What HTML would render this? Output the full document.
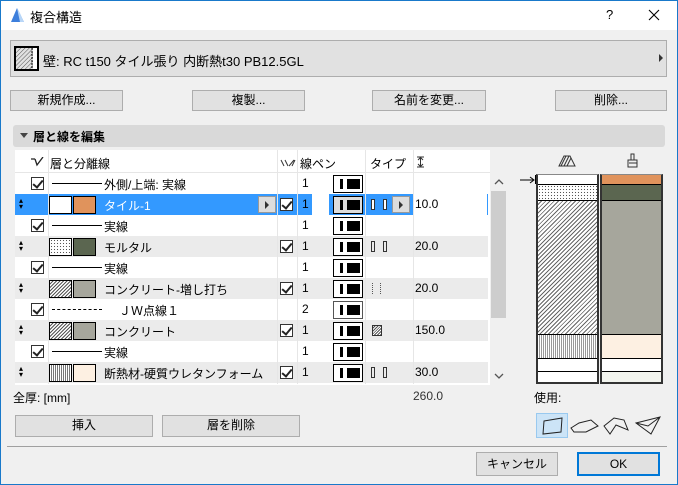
<!DOCTYPE html>
<html><head><meta charset="utf-8">
<style>
*{box-sizing:border-box;margin:0;padding:0}
body{width:678px;height:485px;overflow:hidden;background:#f0f0f0;font-family:"Liberation Sans","Noto Sans CJK JP",sans-serif;font-size:12px;color:#000;position:relative}
.a{position:absolute}
.btn{position:absolute;background:#e1e1e1;border:1px solid #adadad;text-align:center;line-height:19px;font-size:12px}
.row{position:absolute;left:15px;width:473px;height:21px}
.cb{position:absolute;width:13px;height:13px;border:1px solid #333;background:#fff}
.cb:after{content:"";position:absolute;left:3px;top:0px;width:4px;height:8px;border:solid #222;border-width:0 2px 2px 0;transform:rotate(40deg)}
.pen{position:absolute;left:318px;width:30px;height:18px;border:1px solid #000;background:#fff}
.pen:before{content:"";position:absolute;left:6px;top:3px;width:3px;height:10px;background:#000}
.pen:after{content:"";position:absolute;left:13px;top:3px;width:13px;height:10px;background:#000}
.t{position:absolute;top:3px}
.sw{position:absolute;top:2px;width:23px;height:18px;border:1px solid #000}
.ln{position:absolute;left:37px;top:10px;width:50px;border-top:1px solid #000}
.ud{position:absolute;left:2px;top:4px;font-size:8px;line-height:6px;width:8px;text-align:center}
.tp{position:absolute;top:5px;width:4px;height:11px;border:1px solid #333}
</style></head><body>
<div class="a" style="left:0;top:0;width:678px;height:485px;border:1px solid #1979ca"></div>
<div class="a" style="left:1px;top:1px;width:676px;height:29px;background:#fff"></div>
<svg class="a" style="left:9px;top:6px" width="17" height="17"><path d="M2 16 L8 2 L15 16 Z" fill="#3d7fdc"/><path d="M8 2 C11 6 13 12 15 16 L11 16 Z" fill="#b8d6f7"/></svg>
<div class="a" style="left:30px;top:7px;font-size:13px">複合構造</div>
<div class="a" style="left:606px;top:7px;font-size:13px">?</div>
<svg class="a" style="left:648px;top:9px" width="12" height="12"><path d="M1 1 L11 11 M11 1 L1 11" stroke="#000" stroke-width="1.1"/></svg>

<div class="a" style="left:10px;top:40px;width:657px;height:37px;background:#e1e1e1;border:1px solid #adadad"></div>
<svg class="a" style="left:14px;top:46px" width="26" height="25"><defs><pattern id="h" width="3" height="3" patternUnits="userSpaceOnUse" patternTransform="rotate(45)"><line x1="0" y1="0" x2="0" y2="3" stroke="#555" stroke-width="1"/></pattern></defs><rect x="1" y="1" width="23" height="23" fill="url(#h)" stroke="#000" stroke-width="2"/><line x1="18" y1="2" x2="18" y2="23" stroke="#000" stroke-dasharray="2,1"/><rect x="19" y="2" width="4" height="21" fill="#fff"/></svg>
<div class="a" style="left:43px;top:51px;font-size:13px">壁: RC t150 タイル張り 内断熱t30 PB12.5GL</div>
<div class="a" style="left:659px;top:54px;width:0;height:0;border-left:4px solid #333;border-top:4px solid transparent;border-bottom:4px solid transparent"></div>

<div class="btn" style="left:10px;top:90px;width:113px;height:21px">新規作成...</div>
<div class="btn" style="left:192px;top:90px;width:113px;height:21px">複製...</div>
<div class="btn" style="left:372px;top:90px;width:114px;height:21px">名前を変更...</div>
<div class="btn" style="left:555px;top:90px;width:112px;height:21px">削除...</div>

<div class="a" style="left:13px;top:125px;width:652px;height:22px;background:#d9d9d9;border-radius:3px"></div>
<div class="a" style="left:20px;top:133px;width:0;height:0;border-top:5px solid #444;border-left:4px solid transparent;border-right:4px solid transparent"></div>
<div class="a" style="left:33px;top:128px;font-weight:bold">層と線を編集</div>

<div class="a" style="left:15px;top:150px;width:475px;height:235px;background:#fff"></div>
<div class="a" style="left:15px;top:150px;width:475px;height:23px;background:#fff;border-bottom:1px solid #e6e6e6"></div>
<svg class="a" style="left:31px;top:157px" width="14" height="10"><path d="M0 2 H4 M4 2 L6 8 L12 0" fill="none" stroke="#222" stroke-width="1.3"/></svg>
<div class="a" style="left:50px;top:155px">層と分離線</div>
<svg class="a" style="left:280px;top:159px" width="16" height="8"><path d="M1 1 L4 7 M5 1 L8 7 M9 7 L14 1 M12 7 L15 1" stroke="#333"/></svg>
<div class="a" style="left:300px;top:155px">線ペン</div>
<div class="a" style="left:370px;top:155px">タイプ</div>
<svg class="a" style="left:416px;top:156px" width="9" height="12"><path d="M1 1 H8 M4.5 1 V11 M1 11 H8 M2 4 L4.5 1.5 L7 4 M2 8 L4.5 10.5 L7 8" fill="none" stroke="#333"/></svg>

<div class="row" style="top:173px;background:#fff"><div class="cb" style="left:16px;top:4px"></div><div class="ln"></div><div class="t" style="left:89px">外側/上端: 実線</div><div class="t" style="left:287px">1</div><div class="pen" style="top:2px"></div></div>

<div class="row" style="top:194px;background:#fff"><div class="a" style="left:0;top:0;width:262px;height:21px;background:#3399ff"></div><div class="a" style="left:262px;top:0;width:35px;height:21px;background:#3399ff"></div>
<div class="ud">▴<br>▾</div>
<div class="sw" style="left:34px;background:#fff"></div><div class="sw" style="left:58px;background:#e0935c"></div>
<div class="t" style="left:89px;color:#fff">タイル-1</div>
<div class="a" style="left:243px;top:2px;width:18px;height:17px;background:#ddd;border:1px solid #999"></div><div class="a" style="left:250px;top:7px;border-left:4px solid #333;border-top:4px solid transparent;border-bottom:4px solid transparent"></div>
<div class="cb" style="left:265px;top:4px"></div>
<div class="t" style="left:287px">1</div>
<div class="a" style="left:314px;top:0;width:36px;height:21px;background:#3399ff"></div><div class="pen" style="top:2px;background:#ddd"></div>
<div class="a" style="left:351px;top:0;width:47px;height:21px;background:#3399ff"></div><div class="tp" style="left:356px;background:#fff"></div><div class="tp" style="left:368px;background:#fff"></div>
<div class="a" style="left:377px;top:2px;width:18px;height:17px;background:#ddd;border:1px solid #999"></div><div class="a" style="left:384px;top:7px;border-left:4px solid #333;border-top:4px solid transparent;border-bottom:4px solid transparent"></div>
<div class="t" style="left:400px">10.0</div>
<div class="a" style="left:472px;top:0;width:1px;height:21px;background:#3399ff"></div></div>

<div class="row" style="top:215px;background:#fff"><div class="cb" style="left:16px;top:4px"></div><div class="ln"></div><div class="t" style="left:89px">実線</div><div class="t" style="left:287px">1</div><div class="pen" style="top:2px"></div></div>

<div class="row" style="top:236px;background:#ebebeb"><div class="ud">▴<br>▾</div><div class="sw" style="left:34px;background:#fff radial-gradient(#555 0.6px,transparent 0.8px) 0 0/3px 3px"></div><div class="sw" style="left:58px;background:#5b6650"></div><div class="t" style="left:89px">モルタル</div><div class="cb" style="left:265px;top:4px"></div><div class="t" style="left:287px">1</div><div class="pen" style="top:2px"></div><div class="tp" style="left:356px"></div><div class="tp" style="left:368px"></div><div class="t" style="left:400px">20.0</div></div>

<div class="row" style="top:257px;background:#fff"><div class="cb" style="left:16px;top:4px"></div><div class="ln"></div><div class="t" style="left:89px">実線</div><div class="t" style="left:287px">1</div><div class="pen" style="top:2px"></div></div>

<div class="row" style="top:278px;background:#ebebeb"><div class="ud">▴<br>▾</div><div class="sw" style="left:34px;background:repeating-linear-gradient(135deg,#fff 0 1.5px,#555 1.5px 2.5px)"></div><div class="sw" style="left:58px;background:#a6a69c"></div><div class="t" style="left:89px">コンクリート-増し打ち</div><div class="cb" style="left:265px;top:4px"></div><div class="t" style="left:287px">1</div><div class="pen" style="top:2px"></div><div class="a" style="left:357px;top:5px;width:9px;height:11px;border-left:1px dotted #555;border-right:1px dotted #555"></div><div class="t" style="left:400px">20.0</div></div>

<div class="row" style="top:299px;background:#fff"><div class="cb" style="left:16px;top:4px"></div><div class="ln" style="border-top:1px dashed #000"></div><div class="t" style="left:104px">ＪＷ点線１</div><div class="t" style="left:287px">2</div><div class="pen" style="top:2px;border-color:#555"></div></div>

<div class="row" style="top:320px;background:#ebebeb"><div class="ud">▴<br>▾</div><div class="sw" style="left:34px;background:repeating-linear-gradient(135deg,#fff 0 1.5px,#555 1.5px 2.5px)"></div><div class="sw" style="left:58px;background:#a6a69c"></div><div class="t" style="left:89px">コンクリート</div><div class="cb" style="left:265px;top:4px"></div><div class="t" style="left:287px">1</div><div class="pen" style="top:2px"></div><div class="a" style="left:357px;top:5px;width:10px;height:11px;border:1px solid #333;background:repeating-linear-gradient(135deg,#fff 0 1px,#555 1px 2px)"></div><div class="t" style="left:400px">150.0</div></div>

<div class="row" style="top:341px;background:#fff"><div class="cb" style="left:16px;top:4px"></div><div class="ln"></div><div class="t" style="left:89px">実線</div><div class="t" style="left:287px">1</div><div class="pen" style="top:2px"></div></div>

<div class="row" style="top:362px;background:#ebebeb;height:21px"><div class="ud">▴<br>▾</div><div class="sw" style="left:34px;background:repeating-linear-gradient(90deg,#fff 0 1px,#777 1px 2px)"></div><div class="sw" style="left:58px;background:#fdf0e2"></div><div class="t" style="left:89px">断熱材-硬質ウレタンフォーム</div><div class="cb" style="left:265px;top:4px"></div><div class="t" style="left:287px">1</div><div class="pen" style="top:2px"></div><div class="tp" style="left:356px"></div><div class="tp" style="left:368px"></div><div class="t" style="left:400px">30.0</div></div>

<div class="a" style="left:48px;top:150px;width:1px;height:234px;background:#e6e6e6"></div>
<div class="a" style="left:277px;top:150px;width:1px;height:234px;background:#e6e6e6"></div>
<div class="a" style="left:297px;top:150px;width:1px;height:234px;background:#e6e6e6"></div>
<div class="a" style="left:365px;top:150px;width:1px;height:234px;background:#e6e6e6"></div>
<div class="a" style="left:413px;top:150px;width:1px;height:234px;background:#e6e6e6"></div>
<div class="a" style="left:490px;top:173px;width:16px;height:211px;background:#f0f0f0"></div>
<div class="a" style="left:491px;top:191px;width:15px;height:127px;background:#cdcdcd"></div>
<svg class="a" style="left:494px;top:179px" width="10" height="6"><path d="M1 5 L5 1 L9 5" fill="none" stroke="#555" stroke-width="1.3"/></svg>
<svg class="a" style="left:494px;top:373px" width="10" height="6"><path d="M1 1 L5 5 L9 1" fill="none" stroke="#555" stroke-width="1.3"/></svg>

<div class="a" style="left:516px;top:150px;width:150px;height:290px;background:#f0f0f0"></div>
<svg class="a" style="left:558px;top:155px" width="18" height="12"><path d="M1 11 L6 1 H12 L17 11 Z" fill="none" stroke="#333"/><path d="M3 11 L8 1 M6 11 L11 1 M9 11 L13 3" stroke="#333"/></svg>
<svg class="a" style="left:627px;top:153px" width="12" height="15"><rect x="4" y="1" width="3" height="6" fill="none" stroke="#333"/><path d="M2 7 H10 V14 H1 V7 Z" fill="none" stroke="#333"/><path d="M2 10 H10" stroke="#333"/></svg>
<svg class="a" style="left:520px;top:176px" width="16" height="8"><path d="M0 4 H13 M10 1 L14 4 L10 7" fill="none" stroke="#000"/></svg>
<div class="a" style="left:535px;top:175px;width:2px;height:9px;background:#000"></div>
<div class="a" style="left:536px;top:174px;width:63px;height:210px;border:2px solid #333;border-top:1px solid #888;background:#fff"></div>
<div class="a" style="left:538px;top:184px;width:59px;height:16px;border-top:1px solid #000;background:#fff radial-gradient(#555 0.6px,transparent 0.8px) 0 0/3px 3px"></div>
<div class="a" style="left:538px;top:200px;width:59px;height:134px;border-top:1px solid #000;background:repeating-linear-gradient(135deg,#fff 0 2px,#666 2px 3px)"></div>
<div class="a" style="left:538px;top:334px;width:59px;height:24px;border-top:1px solid #000;background:repeating-linear-gradient(90deg,#fff 0 1px,#999 1px 2px)"></div>
<div class="a" style="left:538px;top:358px;width:59px;height:14px;border-top:1px solid #000;border-bottom:1px solid #000"></div>
<div class="a" style="left:600px;top:174px;width:63px;height:210px;border:2px solid #333;border-top:1px solid #888;background:#f2f4ee"></div>
<div class="a" style="left:602px;top:175px;width:59px;height:9px;background:#e0935c"></div>
<div class="a" style="left:602px;top:184px;width:59px;height:16px;border-top:1px solid #000;background:#5b6650"></div>
<div class="a" style="left:602px;top:200px;width:59px;height:134px;border-top:1px solid #000;background:#a6a69c"></div>
<div class="a" style="left:602px;top:334px;width:59px;height:24px;border-top:1px solid #000;background:#fdf0e2"></div>
<div class="a" style="left:602px;top:358px;width:59px;height:14px;border-top:1px solid #000;border-bottom:1px solid #000;background:#fff"></div>

<div class="a" style="left:13px;top:389px">全厚: [mm]</div>
<div class="a" style="left:413px;top:389px;color:#333">260.0</div>
<div class="a" style="left:534px;top:389px">使用:</div>
<div class="btn" style="left:15px;top:415px;width:138px;height:22px">挿入</div>
<div class="btn" style="left:162px;top:415px;width:138px;height:22px">層を削除</div>
<div class="a" style="left:536px;top:413px;width:32px;height:25px;background:#cce4f7;border:1px solid #99c9ef"></div>
<svg class="a" style="left:536px;top:413px" width="132" height="25"><path d="M8 8 L26 5 L25 19 L7 21 Z" fill="none" stroke="#222"/><path d="M35 15 L43 10 L55 7 L62 13 L50 19 L38 19 Z" fill="none" stroke="#222"/><path d="M68 13 L78 5 L88 7 L92 17 L80 12 L74 21 Z" fill="none" stroke="#222"/><path d="M100 10 L124 4 L115 21 Z M100 10 L112 13 L124 4" fill="none" stroke="#222"/></svg>

<div class="a" style="left:7px;top:446px;width:660px;height:1px;background:#a0a0a0"></div>
<div class="btn" style="left:476px;top:452px;width:82px;height:24px;line-height:22px">キャンセル</div>
<div class="btn" style="left:577px;top:452px;width:83px;height:24px;line-height:20px;border:2px solid #0078d7">OK</div>
</body></html>
